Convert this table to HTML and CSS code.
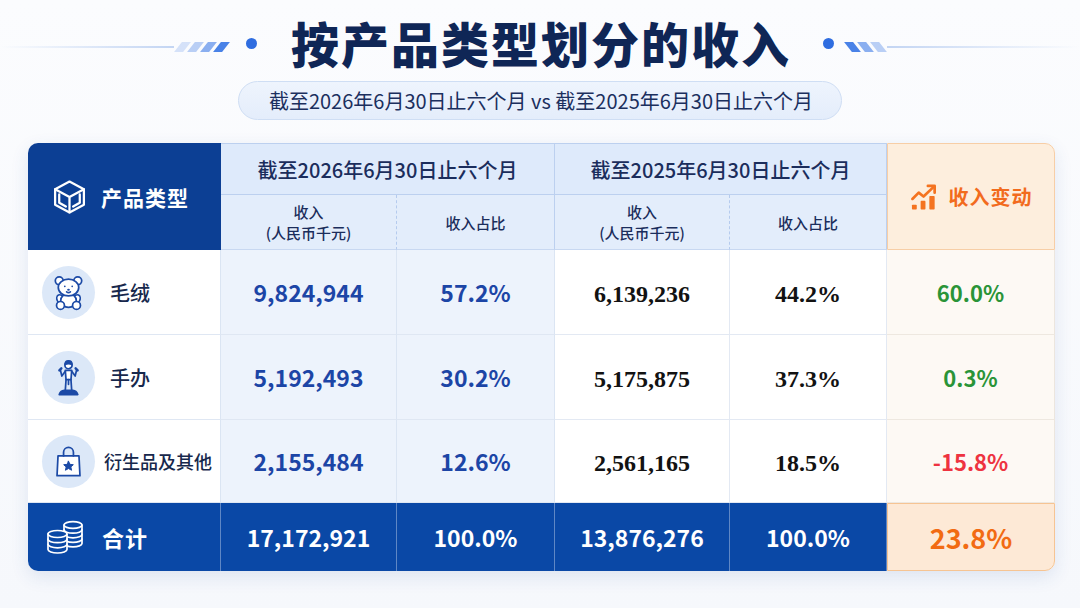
FILE: index.html
```html
<!DOCTYPE html>
<html lang="zh-CN">
<head>
<meta charset="utf-8">
<title>按产品类型划分的收入</title>
<link rel="stylesheet" href="styles.css">
</head>
<body>
<header class="title-row">
  <div class="deco deco-left">
    <span class="line"></span>
    <span class="slashes"><i class="slash s1"></i><i class="slash s2"></i><i class="slash s3"></i><i class="slash s4"></i></span>
    <span class="dot"></span>
  </div>
  <h1 class="title">按产品类型划分的收入</h1>
  <div class="deco deco-right">
    <span class="dot"></span>
    <span class="slashes"><i class="slash s4"></i><i class="slash s3"></i><i class="slash s2"></i></span>
    <span class="line"></span>
  </div>
</header>
<div class="subtitle">截至2026年6月30日止六个月 vs 截至2025年6月30日止六个月</div>

<div class="table">
  <div class="cell h-type">
    <svg class="ico-cube" viewBox="0 0 36 36" fill="none" stroke="#fff" stroke-width="2.2" stroke-linejoin="round" stroke-linecap="round">
      <path d="M18 3 L32 10.5 V25.5 L18 33 L4 25.5 V10.5 Z"/>
      <path d="M4 10.5 L18 18 L32 10.5 M18 18 V33"/>
      <path d="M8 15.5 V23.5 L14.5 27.2 M28 15.5 V23.5 L21.5 27.2"/>
    </svg>
    <span>产品类型</span>
  </div>
  <div class="cell h-period p1">截至2026年6月30日止六个月</div>
  <div class="cell h-period p2">截至2025年6月30日止六个月</div>
  <div class="cell h-change">
    <svg class="ico-chart" viewBox="0 0 30 30" fill="none" stroke="#f47320" stroke-width="2.8" stroke-linecap="round" stroke-linejoin="round">
      <path d="M2.5 17 L9 10.5 L14 14.5 L25 4"/>
      <path d="M18.5 3.5 H25.5 V10.5"/>
      <rect x="2" y="23" width="5" height="5" fill="#f47320" stroke="none" rx="0.8"/>
      <rect x="11" y="19" width="5" height="9" fill="#f47320" stroke="none" rx="0.8"/>
      <rect x="20" y="14" width="5.5" height="14" fill="#f47320" stroke="none" rx="0.8"/>
    </svg>
    <span>收入变动</span>
  </div>

  <div class="cell h-sub c2 dash">收入<br>(人民币千元)</div>
  <div class="cell h-sub c3">收入占比</div>
  <div class="cell h-sub c4 dash">收入<br>(人民币千元)</div>
  <div class="cell h-sub c5">收入占比</div>

  <!-- Row 1 -->
  <div class="cell name">
    <span class="badge">
      <svg viewBox="0 0 30 30" fill="#fff" stroke="#1c4aa6" stroke-width="1.4" stroke-linejoin="round" stroke-linecap="round">
        <circle cx="7.5" cy="5.5" r="3.2"/>
        <circle cx="22.5" cy="5.5" r="3.2"/>
        <ellipse cx="8.5" cy="20.5" rx="2.8" ry="3.8" transform="rotate(-25 8.5 20.5)"/>
        <ellipse cx="21.5" cy="20.5" rx="2.8" ry="3.8" transform="rotate(25 21.5 20.5)"/>
        <ellipse cx="15" cy="21.5" rx="6.3" ry="5.6"/>
        <ellipse cx="15" cy="11" rx="8.3" ry="6.8"/>
        <circle cx="8.5" cy="25.5" r="3.2"/>
        <circle cx="21.5" cy="25.5" r="3.2"/>
        <circle cx="12" cy="10" r="0.7" fill="#1c4aa6" stroke="none"/>
        <circle cx="18" cy="10" r="0.7" fill="#1c4aa6" stroke="none"/>
        <ellipse cx="15" cy="12.8" rx="1.1" ry="0.8" fill="#1c4aa6" stroke="none"/>
        <path d="M13.5 14.5 Q15 15.7 16.5 14.5" fill="none"/>
      </svg>
    </span>
    <span class="label">毛绒</span>
  </div>
  <div class="cell cur">9,824,944</div>
  <div class="cell cur">57.2%</div>
  <div class="cell prev">6,139,236</div>
  <div class="cell prev">44.2%</div>
  <div class="cell chg up">60.0%</div>

  <!-- Row 2 -->
  <div class="cell name">
    <span class="badge">
      <svg viewBox="0 0 30 30" fill="none" stroke="#1c4aa6" stroke-width="1.4" stroke-linejoin="round" stroke-linecap="round">
        <circle cx="15" cy="5" r="2.9" fill="#fff"/>
        <path d="M12.2 4.4 Q12.5 1.4 15 1.6 Q17.8 1.4 17.8 4.4 Q15 3.2 12.2 4.4 Z" fill="#1c4aa6"/>
        <path d="M12.4 9.2 H17.6 L17 16.8 H13 Z" fill="#fff"/>
        <path d="M12.4 10 L9.6 13.8 L8.4 8.8"/>
        <path d="M7.6 9.2 L9.2 7.6" stroke-width="2"/>
        <path d="M17.6 10 L20.4 13.8 L21.6 8.8"/>
        <path d="M22.4 9.2 L20.8 7.6" stroke-width="2"/>
        <path d="M13 16.8 L12.4 25.5 M17 16.8 L17.6 25.5 M15 16.8 V20.5"/>
        <path d="M7.5 28.8 Q8.6 25.6 11.5 25.4 H18.5 Q21.4 25.6 22.5 28.8 Z" fill="#1c4aa6"/>
      </svg>
    </span>
    <span class="label">手办</span>
  </div>
  <div class="cell cur">5,192,493</div>
  <div class="cell cur">30.2%</div>
  <div class="cell prev">5,175,875</div>
  <div class="cell prev">37.3%</div>
  <div class="cell chg up">0.3%</div>

  <!-- Row 3 -->
  <div class="cell name">
    <span class="badge">
      <svg viewBox="0 0 30 30" fill="none" stroke="#1c4aa6" stroke-width="1.4" stroke-linejoin="round" stroke-linecap="round">
        <path d="M6.5 10.5 H23.5 L24.3 26.5 H5.7 Z" fill="#fff"/>
        <path d="M11 10.5 V7.5 A4 4 0 0 1 19 7.5 V10.5"/>
        <path d="M15 14.8 L16.2 17.3 L18.9 17.6 L16.9 19.4 L17.5 22.1 L15 20.7 L12.5 22.1 L13.1 19.4 L11.1 17.6 L13.8 17.3 Z" fill="#1c4aa6" stroke-width="0.8"/>
      </svg>
    </span>
    <span class="label small">衍生品及其他</span>
  </div>
  <div class="cell cur">2,155,484</div>
  <div class="cell cur">12.6%</div>
  <div class="cell prev">2,561,165</div>
  <div class="cell prev">18.5%</div>
  <div class="cell chg down">-15.8%</div>

  <!-- Total -->
  <div class="cell t-name">
    <svg class="ico-coins" viewBox="0 0 38 36" fill="#0a48a6" stroke="#fff" stroke-width="1.7" stroke-linejoin="round" stroke-linecap="round">
      <path d="M18 6 V24.5 A9 3.4 0 0 0 36 24.5 V6"/>
      <ellipse cx="27" cy="6" rx="9" ry="3.4"/>
      <path d="M18 10.8 A9 3.4 0 0 0 36 10.8 M18 15.4 A9 3.4 0 0 0 36 15.4 M18 20 A9 3.4 0 0 0 36 20" fill="none"/>
      <path d="M2 15 V30.5 A9.5 3.5 0 0 0 21 30.5 V15"/>
      <ellipse cx="11.5" cy="15" rx="9.5" ry="3.5"/>
      <path d="M2 20.2 A9.5 3.5 0 0 0 21 20.2 M2 25.3 A9.5 3.5 0 0 0 21 25.3" fill="none"/>
    </svg>
    <span>合计</span>
  </div>
  <div class="cell tot">17,172,921</div>
  <div class="cell tot">100.0%</div>
  <div class="cell tot">13,876,276</div>
  <div class="cell tot">100.0%</div>
  <div class="cell t-chg">23.8%</div>
</div>
</body>
</html>
```
FILE: styles.css
```css
* { box-sizing: border-box; }

body {
  margin: 0;
  width: 1080px;
  height: 608px;
  overflow: hidden;
  background: linear-gradient(180deg, #fbfcfe 0%, #f6f8fc 100%);
  font-family: "Noto Sans CJK SC", "Noto Sans", sans-serif;
  color: #1b2d5a;
}

/* ---------- Title ---------- */
.title-row {
  display: flex;
  align-items: center;
  padding-top: 12px;
  height: 72px;
}
.title {
  margin: 0 32px 0 34px;
  font-size: 48px;
  line-height: 58px;
  font-weight: 900;
  letter-spacing: 2px;
  color: #0f2656;
}
.deco {
  flex: 1;
  display: flex;
  align-items: center;
  transform: translateY(5px);
}
.deco .line {
  flex: 1;
  height: 2px;
}
.deco-left .line { background: linear-gradient(90deg, rgba(200, 215, 242, 0) 0%, #c3d5f3 100%); }
.deco-right .line { background: linear-gradient(90deg, #c3d5f3 0%, rgba(200, 215, 242, 0) 100%); }
.slashes {
  display: flex;
  gap: 4px;
  padding: 0 4px;
}
.slash {
  display: block;
  width: 9px;
  height: 10px;
  background: #3f7be6;
}
.deco-left .slash { transform: skewX(-38deg); }
.deco-right .slash { transform: skewX(38deg); }
.slash.s1 { opacity: 0.2; }
.slash.s2 { opacity: 0.35; }
.slash.s3 { opacity: 0.6; }
.slash.s4 { opacity: 0.95; }
.deco .dot {
  width: 11px;
  height: 11px;
  border-radius: 50%;
  background: #2f6de0;
  transform: translateY(-4px);
}
.deco-left .dot { margin-left: 16px; }
.deco-right .dot { margin-right: 10px; }

.subtitle {
  margin: 9px auto 0;
  width: fit-content;
  height: 39px;
  padding: 0 28px 0 30px;
  display: flex;
  align-items: center;
  border-radius: 20px;
  background: linear-gradient(180deg, #eef4fd 0%, #e4edfb 100%);
  border: 1px solid #cfdef4;
  font-size: 20px;
  color: #1b2f5e;
}

/* ---------- Table ---------- */
.table {
  margin: 23px 0 0 28px;
  width: 1027px;
  display: grid;
  grid-template-columns: 193px 176px 158px 175px 157px 168px;
  grid-template-rows: 52px 55px 85px 85px 83px 68px;
  border-radius: 10px;
  box-shadow: 0 6px 18px rgba(40, 80, 160, 0.12);
  background: #fff;
}
.cell {
  display: flex;
  align-items: center;
  justify-content: center;
  text-align: center;
}

.h-type {
  grid-row: 1 / span 2;
  grid-column: 1;
  justify-content: flex-start;
  padding-left: 23px;
  gap: 13px;
  background: #0c3f94;
  border-radius: 10px 0 0 0;
  color: #fff;
  font-size: 21px;
  font-weight: 700;
  letter-spacing: 1px;
}
.ico-cube { width: 37px; height: 40px; }

.h-period {
  grid-row: 1;
  background: #deeafb;
  border-top: 1px solid #bcd0ef;
  border-bottom: 1px solid #bcd0ef;
  border-right: 1px solid #bcd0ef;
  font-size: 20px;
  font-weight: 500;
  color: #1b2d5c;
}
.h-period.p1 { grid-column: 2 / span 2; }
.h-period.p2 { grid-column: 4 / span 2; }

.h-change {
  grid-row: 1 / span 2;
  grid-column: 6;
  gap: 10px;
  background: #fdeedd;
  border: 1px solid #f7cea6;
  border-radius: 0 10px 0 0;
  color: #f26b1d;
  font-size: 20px;
  font-weight: 700;
  letter-spacing: 1px;
}
.ico-chart { width: 29px; height: 30px; }

.h-sub {
  grid-row: 2;
  background: #e3edfb;
  border-right: 1px solid #bcd0ef;
  border-bottom: 1px solid #c8d8f1;
  font-size: 15px;
  font-weight: 500;
  line-height: 21px;
  color: #1b2d5c;
}
.h-sub.dash { border-right: 1px dashed #b5cbee; }

.name {
  justify-content: flex-start;
  padding-left: 14px;
  background: #fff;
  border-right: 1px solid #dbe5f3;
  border-bottom: 1px solid #dfe7f3;
}
.badge {
  width: 53px;
  height: 53px;
  border-radius: 50%;
  background: #dce8f8;
  display: flex;
  align-items: center;
  justify-content: center;
  flex: none;
}
.badge svg { width: 37px; height: 37px; }
.label {
  margin-left: 15px;
  font-size: 20px;
  font-weight: 500;
  color: #17284c;
}
.label.small {
  margin-left: 9px;
  font-size: 18px;
}

.cur {
  background: #edf3fc;
  border-right: 1px solid #dbe5f3;
  border-bottom: 1px solid #dfe7f3;
  font-size: 23px;
  font-weight: 700;
  color: #1c45a6;
}
.prev {
  padding-top: 4px;
  background: #fff;
  border-right: 1px solid #e3e9f3;
  border-bottom: 1px solid #e3e9f3;
  font-family: "Liberation Serif", "Times New Roman", serif;
  font-size: 24px;
  font-weight: 700;
  color: #121212;
}
.chg {
  background: #fdf9f4;
  border-bottom: 1px solid #eee8e0;
  border-right: 1px solid #ece6de;
  font-size: 22px;
  font-weight: 700;
}
.chg.up { color: #2a9437; }
.chg.down { color: #ee3340; }

.t-name {
  justify-content: flex-start;
  padding-left: 18px;
  gap: 18px;
  background: #0a48a6;
  border-right: 1px solid rgba(255, 255, 255, 0.35);
  border-radius: 0 0 0 10px;
  color: #fff;
  font-size: 22px;
  font-weight: 700;
  letter-spacing: 1px;
}
.ico-coins { width: 38px; height: 36px; }
.tot {
  background: #0a48a6;
  border-right: 1px solid rgba(255, 255, 255, 0.35);
  color: #fff;
  font-size: 23px;
  font-weight: 700;
}
.t-chg {
  background: #fde9d6;
  border: 1px solid #f6c493;
  border-radius: 0 0 10px 0;
  color: #f26b12;
  font-size: 27px;
  font-weight: 700;
}
```
